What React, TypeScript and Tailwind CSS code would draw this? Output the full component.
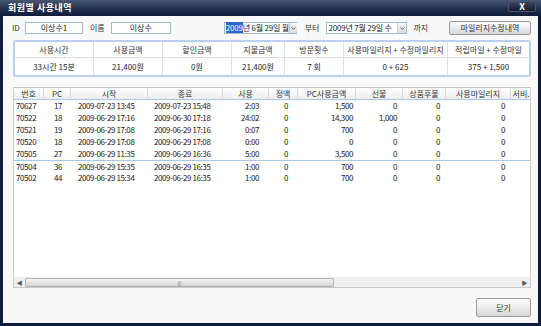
import { ChevronDown } from "lucide-react";

type Col = { title: string; w: string; cell: string };

const cols: Col[] = [
  { title: "번호", w: "w-[30px]", cell: "text-left pl-[2px]" },
  { title: "PC", w: "w-[27px]", cell: "text-left pl-[10px]" },
  { title: "시작", w: "w-[77px]", cell: "text-left pl-[7px]" },
  { title: "종료", w: "w-[75px]", cell: "text-left pl-[6px]" },
  { title: "사용", w: "w-[46px]", cell: "text-right pr-[10px]" },
  { title: "정액", w: "w-[29px]", cell: "text-right pr-[10px]" },
  { title: "PC사용금액", w: "w-[58px]", cell: "text-right pr-[3px]" },
  { title: "선불", w: "w-[47px]", cell: "text-right pr-[6px]" },
  { title: "상품후불", w: "w-[43px]", cell: "text-right pr-[6px]" },
  { title: "사용마일리지", w: "w-[65px]", cell: "text-right pr-[6px]" },
  { title: "서비", w: "w-[21px]", cell: "text-right pr-[3px]" },
];

const rows = [
  ["70627", "17", "2009-07-23 13:45", "2009-07-23 15:48", "2:03", "0", "1,500", "0", "0", "0", ""],
  ["70522", "18", "2009-06-29 17:16", "2009-06-30 17:18", "24:02", "0", "14,300", "1,000", "0", "0", ""],
  ["70521", "19", "2009-06-29 17:08", "2009-06-29 17:16", "0:07", "0", "700", "0", "0", "0", ""],
  ["70520", "18", "2009-06-29 17:08", "2009-06-29 17:08", "0:00", "0", "0", "0", "0", "0", ""],
  ["70505", "27", "2009-06-29 11:35", "2009-06-29 16:36", "5:00", "0", "3,500", "0", "0", "0", ""],
  ["70504", "36", "2009-06-29 15:35", "2009-06-29 16:35", "1:00", "0", "700", "0", "0", "0", ""],
  ["70502", "44", "2009-06-29 15:34", "2009-06-29 16:35", "1:00", "0", "700", "0", "0", "0", ""],
];

const summary = [
  { title: "사용시간", value: "33시간 15분", w: "w-[79px]" },
  { title: "사용금액", value: "21,400원", w: "w-[69px]" },
  { title: "할인금액", value: "0원", w: "w-[69px]" },
  { title: "지불금액", value: "21,400원", w: "w-[53px]" },
  { title: "방문횟수", value: "7 회", w: "w-[59px]" },
  { title: "사용마일리지 + 수정마일리지", value: "0 + 625", w: "w-[104px]" },
  { title: "적립마일 + 수정마일", value: "375 + 1,500", w: "flex-1" },
];

function DatePicker({ year, rest, w }: { year: string; rest: string; w: string }) {
  return (
    <div className={`flex h-[12px] items-center border border-[#a9b7cb] bg-white ${w}`}>
      <div className="flex-1 whitespace-nowrap pl-[1px] leading-[10px] tracking-[-0.2px]">
        <span className="bg-[#3165c5] text-white">{year}</span>
        {rest}
      </div>
      <div className="flex h-[10px] w-[9px] items-center justify-center border-l border-[#c8c8c8] bg-gradient-to-b from-[#fbfbfb] to-[#dcdcdc]">
        <ChevronDown className="size-[7px] text-[#444]" strokeWidth={3} />
      </div>
    </div>
  );
}

export default function App() {
  return (
    <div className="flex h-[326px] w-[541px] flex-col bg-[#0f1c3c] font-['Noto_Sans_CJK_KR','Noto_Sans',sans-serif] text-[8px] text-[#222]">
      {/* title bar */}
      <div className="flex h-[16px] items-center justify-between bg-gradient-to-b from-[#4b5672] via-[#26324f] to-[#111d3b] pl-[8px] pr-[5px]">
        <span className="text-[9px] font-bold tracking-[0.5px] text-white">회원별 사용내역</span>
        <div className="mb-[3px] flex h-[11px] w-[28px] items-center justify-center rounded-[2px] border border-[#4a5470] bg-gradient-to-b from-[#3c4660] to-[#151d33] text-[9px] font-bold leading-none text-white">
          X
        </div>
      </div>

      {/* body */}
      <div className="mx-[3px] mb-[3px] flex flex-1 flex-col bg-[#f9f9f9] pl-[10px] pr-[7px]">
        {/* filter row */}
        <div className="mt-[5px] flex h-[14px] items-center">
          <span className="w-[12px] -ml-[1px] text-[#333]">ID</span>
          <div className="ml-[1px] flex h-[12px] w-[58px] items-center justify-center border border-[#a9b7cb] bg-white">이상수1</div>
          <span className="ml-[7px] text-[#333]">이름</span>
          <div className="ml-[6px] flex h-[12px] w-[60px] items-center justify-center border border-[#a9b7cb] bg-white">이상수</div>
          <div className="ml-[53px]">
            <DatePicker year="2009" rest="년  6월 29일 월" w="w-[73px]" />
          </div>
          <span className="ml-[8px] text-[#333]">부터</span>
          <div className="ml-[7px]">
            <DatePicker year="" rest="2009년  7월 29일 수" w="w-[81px]" />
          </div>
          <span className="ml-[6px] text-[#333]">까지</span>
          <div className="ml-auto flex h-[14px] w-[82px] items-center justify-center rounded-[2px] border border-[#9a9a9a] bg-gradient-to-b from-[#fdfdfd] via-[#ececec] to-[#d6d6d6] text-[#333]">
            마일리지수정내역
          </div>
        </div>

        {/* summary */}
        <div className="mt-[5px] flex h-[37px] rounded-[3px] border-2 border-[#b9d1ee] bg-white">
          {summary.map((s, i) => (
            <div key={s.title} className={`flex flex-col ${s.w} ${i < summary.length - 1 ? "border-r border-[#dedede]" : ""}`}>
              <div className="flex h-[16px] items-center justify-center whitespace-nowrap border-b border-[#dedede] text-[#333]">{s.title}</div>
              <div className="flex flex-1 items-center justify-center whitespace-nowrap">{s.value}</div>
            </div>
          ))}
        </div>

        {/* table */}
        <div className="mt-[10px] flex h-[201px] flex-col overflow-hidden border border-[#c9c9c9] bg-white">
          <div className="flex h-[12px] border-b border-[#a8c6e6]">
            {cols.map((c) => (
              <div
                key={c.title}
                className={`flex shrink-0 items-center justify-center overflow-hidden whitespace-nowrap border-r border-[#dadada] bg-gradient-to-b from-white to-[#eeeeee] text-[#333] ${c.w}`}
              >
                {c.title === "서비" ? "서비." : c.title}
              </div>
            ))}
          </div>
          <div className="flex-1 tracking-[-0.4px] text-[#1a1a1a]">
            {rows.map((r, ri) => (
              <div key={r[0]} className={`flex h-[12px] items-center ${ri === 5 ? "border-t border-[#a8c6e6]" : ""}`}>
                {r.map((v, ci) => (
                  <div key={ci} className={`shrink-0 whitespace-nowrap ${cols[ci].w} ${cols[ci].cell}`}>
                    {v}
                  </div>
                ))}
              </div>
            ))}
          </div>
          {/* scrollbar */}
          <div className="flex h-[10px] items-center bg-[#efefef]">
            <div className="flex w-[11px] items-center justify-center text-[6px] text-[#555]">◀</div>
            <div className="flex h-[9px] w-[309px] items-center justify-center rounded-[1px] border border-[#b5b5b5] bg-gradient-to-b from-[#f6f6f6] to-[#d4d4d4] text-[5px] leading-none text-[#666]">
              |||
            </div>
            <div className="flex-1" />
            <div className="flex w-[11px] items-center justify-center text-[6px] text-[#555]">▶</div>
          </div>
        </div>

        {/* footer */}
        <div className="mt-[10px] flex justify-end">
          <div className="flex h-[19px] w-[55px] items-center justify-center rounded-[2px] border border-[#9a9a9a] bg-gradient-to-b from-[#fdfdfd] via-[#ececec] to-[#d6d6d6] text-[#333]">
            닫기
          </div>
        </div>
      </div>
    </div>
  );
}
